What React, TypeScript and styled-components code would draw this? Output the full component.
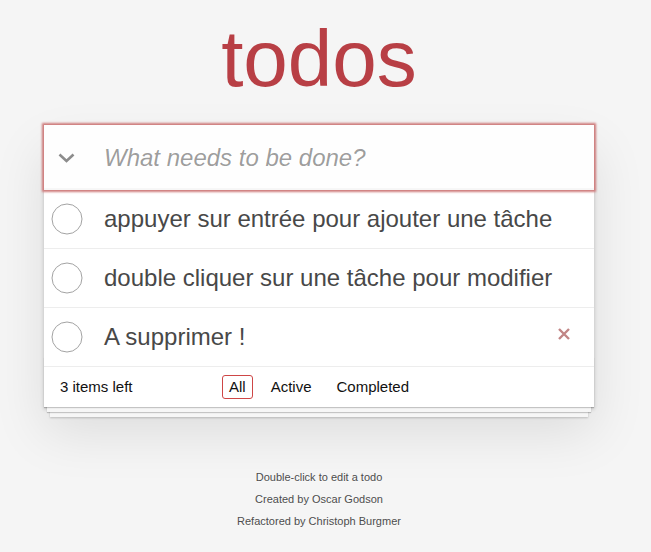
import React, { useState } from "react";
import styled, { createGlobalStyle } from "styled-components";

const GlobalStyle = createGlobalStyle`
  html, body {
    margin: 0;
    padding: 0;
  }
  body {
    background: #f5f5f5;
    color: #111111;
    font: 14px "Liberation Sans", Arial, Helvetica, sans-serif;
    line-height: 1.4em;
    -webkit-font-smoothing: antialiased;
  }
`;

const Page = styled.div`
  width: 550px;
  padding: 19px 0 20px 44px;
`;

const Title = styled.h1`
  margin: 0 0 26px;
  font-size: 80px;
  line-height: 80px;
  font-weight: 400;
  text-align: center;
  color: #b83f45;
`;

const TodoApp = styled.section`
  position: relative;
  background: #fff;
  box-shadow: 0 2px 4px 0 rgba(0, 0, 0, 0.2), 0 25px 50px 0 rgba(0, 0, 0, 0.1);
`;

const Header = styled.header`
  position: relative;
  height: 65px;
  box-shadow: 0 0 2px 2px #cf7d7d;
  z-index: 2;
`;

const ToggleAll = styled.button`
  position: absolute;
  left: 14px;
  top: 28px;
  width: 17px;
  height: 10px;
  padding: 0;
  border: none;
  background: none;
  display: flex;
`;

const NewTodo = styled.input`
  box-sizing: border-box;
  width: 100%;
  height: 65px;
  margin: 0;
  padding: 16px 16px 16px 60px;
  border: none;
  outline: none;
  background: rgba(0, 0, 0, 0.003);
  box-shadow: inset 0 -2px 1px rgba(0, 0, 0, 0.03);
  font-family: inherit;
  font-size: 24px;
  line-height: 1.4em;
  color: #484848;

  &::placeholder {
    font-style: italic;
    color: rgba(0, 0, 0, 0.4);
  }
`;

const List = styled.ul`
  margin: 0;
  padding: 0;
  list-style: none;
`;

const Item = styled.li`
  display: flex;
  align-items: center;
  height: 58px;
  border-bottom: 1px solid #ededed;
  font-size: 24px;
`;

const Check = styled.span`
  width: 53px;
  padding-left: 7px;
  display: flex;
`;

const Label = styled.label`
  flex: 1;
  line-height: 1.2;
  color: #484848;
  word-break: break-all;
`;

const Destroy = styled.button`
  width: 40px;
  height: 40px;
  margin: 0 10px 6px 0;
  padding: 0;
  border: none;
  background: none;
  display: flex;
  align-items: center;
  justify-content: center;
  cursor: pointer;
`;

const Footer = styled.footer`
  position: relative;
  display: grid;
  grid-template-columns: 1fr auto 1fr;
  align-items: center;
  height: 20px;
  padding: 10px 15px;
  font-size: 15px;
  color: #111;

  &::before {
    content: "";
    position: absolute;
    right: 0;
    bottom: 0;
    left: 0;
    height: 50px;
    overflow: hidden;
    box-shadow: 0 1px 1px rgba(0, 0, 0, 0.2), 0 8px 0 -3px #f6f6f6,
      0 9px 1px -3px rgba(0, 0, 0, 0.2), 0 16px 0 -6px #f6f6f6,
      0 17px 2px -6px rgba(0, 0, 0, 0.2);
  }
`;

const Count = styled.span`
  position: relative;
  padding-left: 1px;
  line-height: 20px;
`;

const Filters = styled.ul`
  position: relative;
  display: flex;
  align-items: center;
  gap: 5px;
  height: 20px;
  margin: 0;
  padding: 0;
  list-style: none;
`;

const FilterLink = styled.a<{ $selected?: boolean }>`
  display: block;
  margin: 0 3px;
  padding: 0 6px;
  line-height: 22px;
  color: inherit;
  text-decoration: none;
  border: 1px solid ${({ $selected }) => ($selected ? "#ce4646" : "transparent")};
  border-radius: 3px;
`;

const Info = styled.footer`
  margin: 65px auto 0;
  color: #4d4d4d;
  font-size: 11px;
  text-shadow: 0 1px 0 rgba(255, 255, 255, 0.5);
  text-align: center;

  p {
    line-height: 1;
    margin: 0 0 11px;
  }
`;

const Circle = () => (
  <svg width="32" height="32" viewBox="0 0 32 32">
    <circle cx="16" cy="16" r="15" fill="none" stroke="#a3a3a3" strokeWidth="1" />
  </svg>
);

const todos = [
  "appuyer sur entrée pour ajouter une tâche",
  "double cliquer sur une tâche pour modifier",
  "A supprimer !",
];

const App: React.FC = () => {
  const [text, setText] = useState("");

  return (
    <>
      <GlobalStyle />
      <Page>
        <Title>todos</Title>
        <TodoApp>
          <Header>
            <ToggleAll aria-label="Mark all as complete">
              <svg width="17" height="10" viewBox="0 0 17 10">
                <polyline
                  points="1.5,1.5 8.5,8 15.5,1.5"
                  fill="none"
                  stroke="#8c8c8c"
                  strokeWidth="2.6"
                />
              </svg>
            </ToggleAll>
            <NewTodo
              placeholder="What needs to be done?"
              value={text}
              onChange={(e) => setText(e.target.value)}
            />
          </Header>
          <List>
            {todos.map((t, i) => (
              <Item key={t}>
                <Check>
                  <Circle />
                </Check>
                <Label>{t}</Label>
                {i === 2 && (
                  <Destroy aria-label="Delete">
                    <svg width="12" height="12" viewBox="0 0 12 12">
                      <path
                        d="M1 1 L11 11 M11 1 L1 11"
                        stroke="#c18585"
                        strokeWidth="2.4"
                      />
                    </svg>
                  </Destroy>
                )}
              </Item>
            ))}
          </List>
          <Footer>
            <Count>3 items left</Count>
            <Filters>
              <li>
                <FilterLink href="#/" $selected>
                  All
                </FilterLink>
              </li>
              <li>
                <FilterLink href="#/active">Active</FilterLink>
              </li>
              <li>
                <FilterLink href="#/completed">Completed</FilterLink>
              </li>
            </Filters>
            <span />
          </Footer>
        </TodoApp>
        <Info>
          <p>Double-click to edit a todo</p>
          <p>Created by Oscar Godson</p>
          <p>Refactored by Christoph Burgmer</p>
        </Info>
      </Page>
    </>
  );
};

export default App;
